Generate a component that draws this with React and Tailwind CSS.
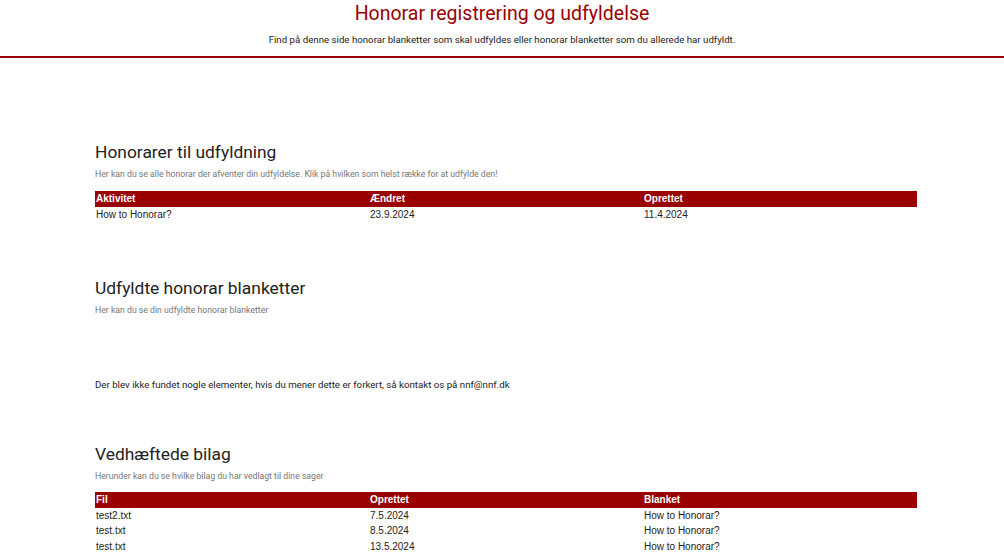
import React from 'react';

const roboto = { fontFamily: 'Roboto, "Liberation Sans", sans-serif' };
const arial = { fontFamily: '"Liberation Sans", Arial, sans-serif' };

const Table = ({ columns, rows }) => (
  <table className="w-full border-collapse text-[10px] text-[#222]" style={arial}>
    <thead>
      <tr className="bg-[#990000] text-white">
        {columns.map((c) => (
          <th key={c} className="w-1/3 h-[16px] px-[1px] text-left font-bold leading-[16px]">{c}</th>
        ))}
      </tr>
    </thead>
    <tbody>
      {rows.map((r, i) => (
        <tr key={i}>
          {r.map((cell, j) => (
            <td key={j} className="h-[15.5px] px-[1px] leading-[15.5px]">{cell}</td>
          ))}
        </tr>
      ))}
    </tbody>
  </table>
);

const Section = ({ title, desc, children }) => (
  <section>
    <h2 className="text-[17.4px] leading-[22px] text-[#222]" style={roboto}>{title}</h2>
    <p className="mt-[5px] text-[8.7px] leading-[12px] text-[#777]" style={roboto}>{desc}</p>
    {children}
  </section>
);

export default function App() {
  return (
    <div className="min-h-screen bg-white">
      {/* Header */}
      <div className="border-b-2 border-[#990000] pb-[10px] text-center" style={roboto}>
        <h1 className="pt-[1px] text-[19.5px] leading-[25px] text-[#990000]">Honorar registrering og udfyldelse</h1>
        <p className="mt-[8px] text-[9.7px] leading-[12px] text-[#222]">
          Find på denne side honorar blanketter som skal udfyldes eller honorar blanketter som du allerede har udfyldt.
        </p>
      </div>

      <main className="ml-[95px] w-[822px] pt-[83px]">
        <Section title="Honorarer til udfyldning" desc="Her kan du se alle honorar der afventer din udfyldelse. Klik på hvilken som helst række for at udfylde den!">
          <div className="mt-[11px]">
            <Table columns={['Aktivitet', 'Ændret', 'Oprettet']} rows={[['How to Honorar?', '23.9.2024', '11.4.2024']]} />
          </div>
        </Section>

        <div className="mt-[54px]">
          <Section title="Udfyldte honorar blanketter" desc="Her kan du se din udfyldte honorar blanketter">
            <p className="mt-[63px] text-[9.7px] leading-[12px] text-[#222]" style={roboto}>
              Der blev ikke fundet nogle elementer, hvis du mener dette er forkert, så kontakt os på nnf@nnf.dk
            </p>
          </Section>
        </div>

        <div className="mt-[52px]">
          <Section title="Vedhæftede bilag" desc="Herunder kan du se hvilke bilag du har vedlagt til dine sager">
            <div className="mt-[10px]">
              <Table
                columns={['Fil', 'Oprettet', 'Blanket']}
                rows={[
                  ['test2.txt', '7.5.2024', 'How to Honorar?'],
                  ['test.txt', '8.5.2024', 'How to Honorar?'],
                  ['test.txt', '13.5.2024', 'How to Honorar?'],
                ]}
              />
            </div>
          </Section>
        </div>
      </main>
    </div>
  );
}
